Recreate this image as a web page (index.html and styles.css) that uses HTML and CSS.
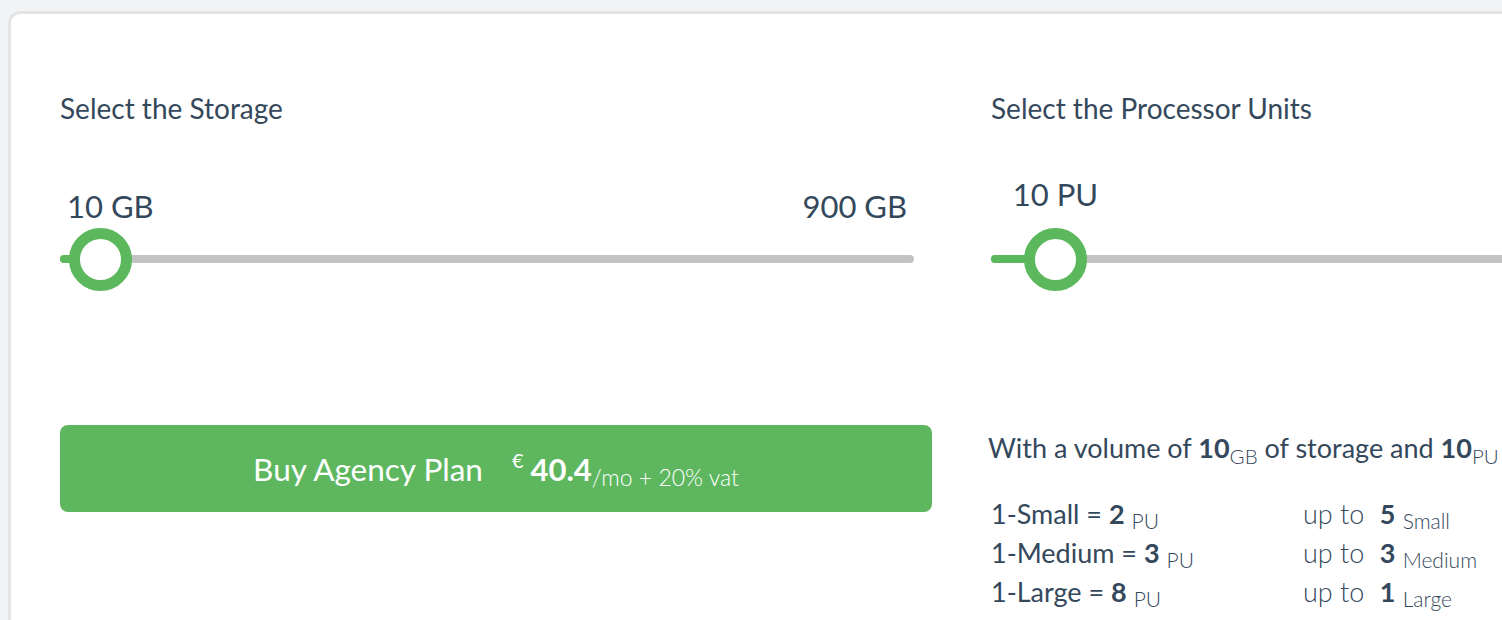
FILE: index.html
```html
<!DOCTYPE html>
<html lang="en">
<head>
  <meta charset="UTF-8" />
  <meta name="viewport" content="width=device-width, initial-scale=1.0"/>
  <title>Agency Plan Configurator</title>
  <link rel="stylesheet" href="styles.css">
</head>
<body>
  <div class="plan-card">
    <div class="plan-grid">
      <div class="plan-col">
        <h2 class="field-title">Select the Storage</h2>
        <div class="slider slider-storage">
          <div class="range-labels">
            <span>10 GB</span>
            <span>900 GB</span>
          </div>
          <div class="track">
            <div class="fill" style="width: 40px"></div>
            <div class="thumb" style="left: 40px"></div>
          </div>
        </div>
      </div>

      <div class="plan-col">
        <h2 class="field-title">Select the Processor Units</h2>
        <div class="slider slider-pu">
          <div class="track">
            <div class="fill" style="width: 64px"></div>
            <div class="thumb" style="left: 64px">
              <span class="thumb-value">10 PU</span>
            </div>
          </div>
        </div>
      </div>

      <div class="plan-col">
        <button class="buy-button">
          <span class="buy-label">Buy Agency Plan</span>
          <span class="price"><sup class="currency">€</sup><strong>40.4</strong><span class="per">/mo + 20% vat</span></span>
        </button>
      </div>

      <div class="plan-col">
        <p class="summary">With a volume of <strong>10</strong><sub>GB</sub> of storage and <strong>10</strong><sub>PU</sub></p>
        <div class="unit-table">
          <div class="unit-row">
            <span>1-Small = <strong>2</strong> <sub>PU</sub></span>
            <span class="upto">up to <strong>5</strong> <sub>Small</sub></span>
          </div>
          <div class="unit-row">
            <span>1-Medium = <strong>3</strong> <sub>PU</sub></span>
            <span class="upto">up to <strong>3</strong> <sub>Medium</sub></span>
          </div>
          <div class="unit-row">
            <span>1-Large = <strong>8</strong> <sub>PU</sub></span>
            <span class="upto">up to <strong>1</strong> <sub>Large</sub></span>
          </div>
        </div>
      </div>
    </div>
  </div>
</body>
</html>
```

FILE: styles.css
```css
* {
  margin: 0;
  padding: 0;
  box-sizing: border-box;
}

body {
  font-family: Lato, 'Open Sans', sans-serif;
  background: #f2f4f5;
  color: #34485c;
  padding: 11px 0 0 8px;
  overflow: hidden;
  width: 1502px;
  height: 620px;
}

.plan-card {
  background: #ffffff;
  border: 3px solid #e2e4e5;
  border-radius: 12px;
  width: 1900px;
  height: 700px;
  padding: 0 0 0 49px;
}

.plan-grid {
  display: grid;
  grid-template-columns: 872px 872px;
  grid-template-rows: 397px auto;
  column-gap: 59px;
}

.field-title {
  font-size: 28px;
  font-weight: 400;
  margin-top: 78px;
  line-height: 32px;
}

/* Sliders */
.slider {
  position: relative;
}

.slider-storage {
  padding-right: 18px;
  margin-top: 64px;
}

.slider-pu {
  margin-top: 131px;
}

.range-labels {
  display: flex;
  justify-content: space-between;
  font-size: 31px;
  line-height: 36px;
  padding: 0 7px;
}

.track {
  position: relative;
  height: 8px;
  border-radius: 4px;
  background: #c3c3c3;
  margin-top: 31px;
}

.slider-pu .track {
  margin-top: 0;
  margin-right: -200px;
}

.fill {
  height: 100%;
  border-radius: 4px;
  background: #5cb85c;
}

.thumb {
  position: absolute;
  top: 50%;
  width: 63px;
  height: 63px;
  margin: -31px 0 0 -31px;
  border: 11px solid #5cb85c;
  border-radius: 50%;
  background: #ffffff;
}

.thumb-value {
  position: absolute;
  bottom: 100%;
  left: 50%;
  transform: translateX(-50%);
  margin-bottom: 27px;
  font-size: 31px;
  line-height: 36px;
  white-space: nowrap;
}

/* Buy button */
.buy-button {
  width: 872px;
  height: 87px;
  margin-top: 14px;
  border: none;
  border-radius: 8px;
  background: #5eb75f;
  color: #ffffff;
  font-family: inherit;
  display: flex;
  align-items: center;
  justify-content: center;
  gap: 29px;
  cursor: pointer;
}

.buy-label {
  font-size: 31.5px;
  font-weight: 400;
}

.price {
  font-size: 31px;
  white-space: nowrap;
}

.price strong {
  font-weight: 700;
}

.currency {
  font-size: 20px;
  line-height: 0;
  margin-right: 7px;
  vertical-align: 13px;
}

.per {
  font-size: 23px;
  font-weight: 300;
  line-height: 0;
  vertical-align: -5px;
}

/* Summary */
.summary {
  font-size: 27px;
  line-height: 32px;
  margin-top: 21px;
  white-space: nowrap;
  margin-left: -3px;
}

.summary strong {
  font-weight: 700;
}

.summary sub {
  font-size: 20.5px;
  font-weight: 300;
  line-height: 0;
  vertical-align: -6px;
}

.unit-table {
  margin-top: 30px;
  font-size: 27px;
}

.unit-row {
  display: grid;
  grid-template-columns: 312px auto;
  line-height: 39px;
  height: 39px;
  white-space: nowrap;
}

.unit-row strong {
  font-weight: 700;
}

.unit-row sub {
  font-size: 21px;
  font-weight: 300;
  line-height: 0;
  vertical-align: -5px;
}

.upto {
  font-weight: 300;
}

.upto strong {
  margin-left: 8px;
}
```
